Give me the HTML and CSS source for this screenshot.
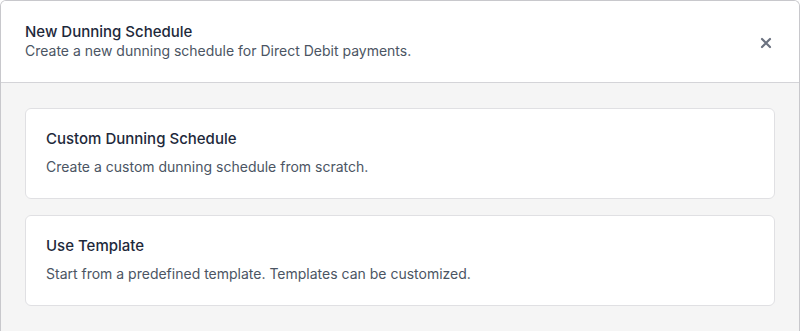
FILE: index.html
```html
<!DOCTYPE html>
<html lang="en">
<head>
  <meta charset="UTF-8">
  <meta name="viewport" content="width=device-width, initial-scale=1.0">
  <title>New Dunning Schedule</title>
  <link rel="stylesheet" href="styles.css">
</head>
<body>
  <div class="modal">
    <div class="modal-header">
      <div class="heading">
        <h1>New Dunning Schedule</h1>
        <p>Create a new dunning schedule for Direct Debit payments.</p>
      </div>
      <button class="close" type="button" aria-label="Close">
        <svg width="12" height="12" viewBox="0 0 12 12">
          <path d="M2 2L10 10M10 2L2 10" stroke="#6b7280" stroke-width="2.2" stroke-linecap="round"/>
        </svg>
      </button>
    </div>
    <div class="modal-body">
      <div class="option-card">
        <h2>Custom Dunning Schedule</h2>
        <p>Create a custom dunning schedule from scratch.</p>
      </div>
      <div class="option-card">
        <h2>Use Template</h2>
        <p>Start from a predefined template. Templates can be customized.</p>
      </div>
    </div>
  </div>
</body>
</html>
```

FILE: styles.css
```css
body {
  margin: 0;
  font-family: Inter, "Noto Sans", sans-serif;
  background-color: #fff;
}
.modal {
  box-sizing: border-box;
  height: 331px;
  border: 1px solid #c8c8cc;
  border-bottom: none;
  border-radius: 6px 6px 0 0;
  overflow: hidden;
  background-color: #f5f5f5;
}
.modal-header {
  display: flex;
  align-items: center;
  justify-content: space-between;
  padding: 21px 24px 22px 24px;
  background-color: #fff;
  border-bottom: 1px solid #d4d4d8;
}
.heading h1 {
  margin: 0;
  font-size: 15px;
  font-weight: 500;
  line-height: 19px;
  color: #1e293b;
}
.heading p {
  margin: 0;
  font-size: 14px;
  line-height: 19px;
  color: #4b5563;
}
.close {
  border: none;
  background: none;
  padding: 0;
  margin-right: 3px;
  margin-top: 3px;
  display: flex;
  cursor: pointer;
}
.modal-body {
  display: flex;
  flex-direction: column;
  gap: 16px;
  padding: 25px 24px;
}
.option-card {
  background-color: #fff;
  border: 1px solid #e0e0e3;
  border-radius: 6px;
  padding: 20px 20px 21px 20px;
}
.option-card h2 {
  margin: 0;
  font-size: 15px;
  font-weight: 500;
  line-height: 20px;
  color: #1e293b;
}
.option-card p {
  margin: 8px 0 0 0;
  font-size: 14px;
  line-height: 20px;
  color: #4b5563;
}
```
